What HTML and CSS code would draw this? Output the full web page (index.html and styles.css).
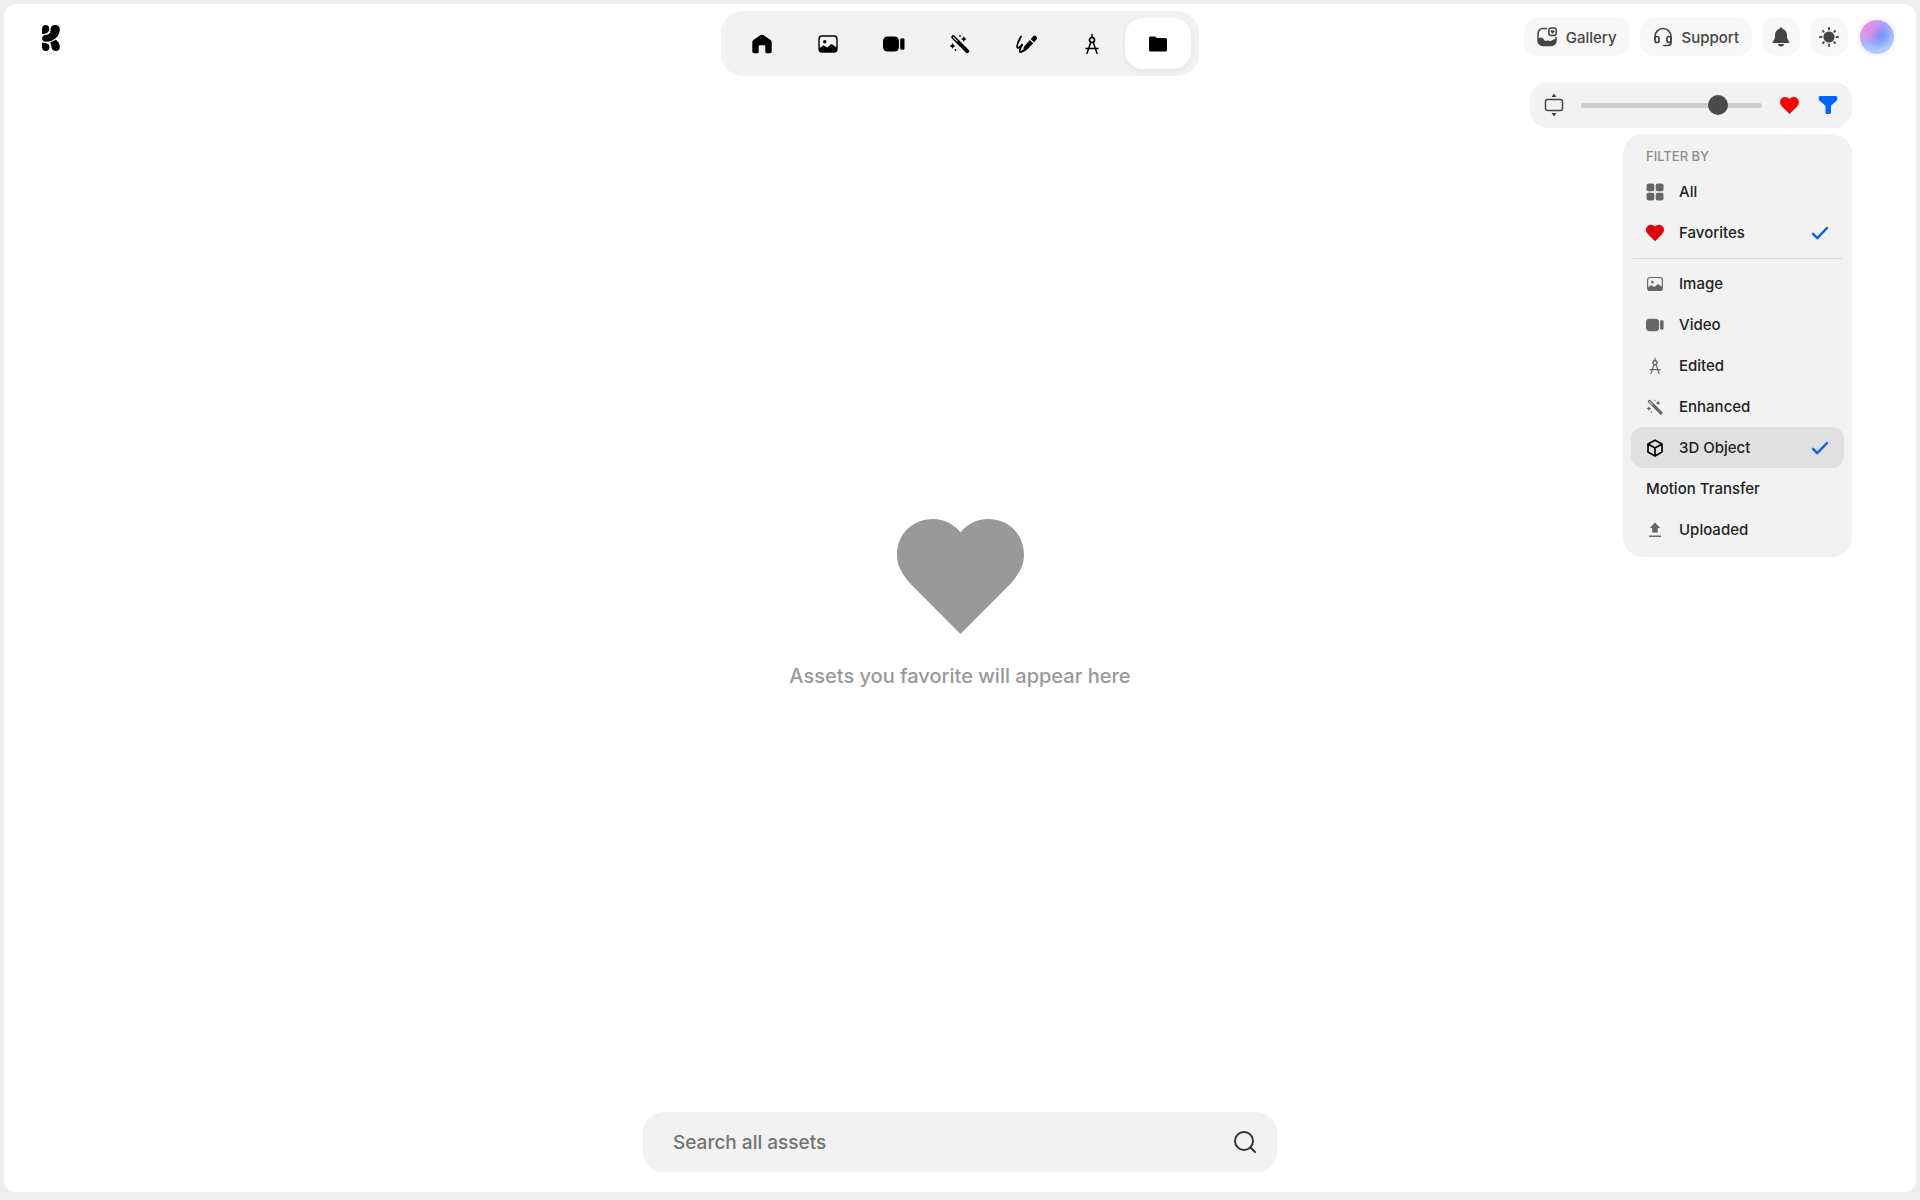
FILE: index.html
```html
<!DOCTYPE html>
<html lang="en">
<head>
<meta charset="utf-8">
<meta name="viewport" content="width=device-width, initial-scale=1">
<title>Assets</title>
<link rel="stylesheet" href="styles.css">
</head>
<body>
<svg class="sprite" aria-hidden="true">
  <symbol id="i-heart" viewBox="0 0 126 114"><path fill="currentColor" d="M63 114 14 65C5 55 0 46 0 36 0 15 15 0 36 0c11 0 20 5 27 13C70 5 79 0 90 0c21 0 36 15 36 36 0 10-5 19-14 29Z"/></symbol>
  <symbol id="i-home" viewBox="0 0 22 22"><path fill="currentColor" d="M9.7 2.1a2.4 2.4 0 0 1 2.6 0l7 4.6A3 3 0 0 1 20.700 9.200V18.500A1.800 1.800 0 0 1 18.900 20.300H15.800A1.500 1.500 0 0 1 14.300 18.800V13.500A1.300 1.300 0 0 0 13 12.200H9A1.300 1.300 0 0 0 7.700 13.500V18.800A1.500 1.500 0 0 1 6.200 20.300H3.100A1.800 1.800 0 0 1 1.300 18.500V9.200A3 3 0 0 1 2.700 6.700Z"/></symbol>
  <symbol id="i-image" viewBox="0 0 22 22"><rect x="2" y="3" width="18" height="16" rx="3.200" fill="none" stroke="currentColor" stroke-width="1.400"/><circle cx="7.800" cy="8.700" r="1.700" fill="currentColor"/><path fill="currentColor" d="M2 15.500 5 13.200Q6.500 12 8 13.200L10.200 14.600 13.300 11.800Q14.600 10.800 16 11.900L20 14.800V16a3 3 0 0 1-3 3H5a3 3 0 0 1-3-3Z"/></symbol>
  <symbol id="i-video" viewBox="0 0 22 22"><rect x="0" y="3.500" width="16" height="15" rx="4.500" fill="currentColor"/><rect x="17.200" y="5.200" width="4.300" height="11.500" rx="1.600" fill="currentColor"/></symbol>
  <symbol id="i-wand" viewBox="0 0 22 22"><path d="m4.200 4.200 14 14" stroke="currentColor" stroke-width="4" stroke-linecap="round"/><path class="wand-slot" d="m4.300 4.300 3.800 3.800" stroke-width="1.300" stroke-linecap="round"/><path fill="currentColor" d="m14.800 3.200 1 1.900 1.900 1-1.900 1-1 1.900-1-1.900-1.900-1 1.900-1ZM3.500 10l1 1.900 1.900 1-1.900 1-1 1.900-1-1.900-1.900-1 1.900-1Z"/><circle cx="11" cy="2.900" r=".9" fill="currentColor"/><circle cx="6.500" cy="17" r=".9" fill="currentColor"/></symbol>
  <symbol id="i-pen" viewBox="0 0 22 22"><path d="M6 3.500C3.500 8 1.800 11.800 2.200 14c.4 2 3.300.3 5.300-3C5.800 14 4.300 17.500 4.900 18.700c.5 1 1.800.2 3.300-1.200" fill="none" stroke="currentColor" stroke-width="1.800" stroke-linecap="round"/><path fill="currentColor" d="M8 19 8.600 14.800Q8.800 13.700 9.600 12.900L14.800 7 18.200 10.200 12.800 16.100Q12 17 11 17.400ZM15.700 6 18 3.400a2.300 2.300 0 0 1 3.300 3.300L19.100 9.200Z"/></symbol>
  <symbol id="i-compass" viewBox="0 0 22 22"><g fill="none" stroke="currentColor" stroke-width="1.500" stroke-linecap="round"><path d="M11 1.500v3M9.800 9.300 6 20.300M12.200 9.300 16 20.300M5 15.500h12"/><circle cx="11" cy="7" r="2.500" stroke-width="1.700"/></g></symbol>
  <symbol id="i-folder" viewBox="0 0 22 22"><path fill="currentColor" d="M2 5a1.500 1.500 0 0 1 1.500-1.500h4.200c.7 0 1 .3 1.400.8l.6.700h8.800A1.500 1.500 0 0 1 20 6.500V17a1.500 1.500 0 0 1-1.500 1.500h-15A1.500 1.500 0 0 1 2 17Z"/></symbol>
  <symbol id="i-check" viewBox="0 0 18 18"><path d="m2 9.800 4.300 4.400L16 4" fill="none" stroke="currentColor" stroke-width="2.500" stroke-linecap="round" stroke-linejoin="round"/></symbol>
</svg>

<div class="app">
  <header class="header">
    <a class="logo" href="#" aria-label="Home page">
      <svg width="18" height="26" viewBox="0 0 18 26"><path d="M0 4.200C0 1.500 1.600 0 3.700 0S7.300 1.600 7.300 4C7.300 7.200 4.500 8.900 0 9.100ZM8.600 4.200C8.600 1.500 10.500 0 13.300 0S17.800 1.600 17.800 4.300C17.800 11 12 16.800 4.200 16.800 1.500 16.800 0 15.300 0 13.200S1.700 10 3.500 9.900C7 9.700 8.600 8 8.600 4.200ZM0 17.800C4.500 17.800 7.500 19 7.500 22.200 7.500 24.600 5.800 26 3.700 26S0 24.500 0 22ZM8 17.600 13.800 14.800C16.500 16.500 17.800 19.500 17.800 22.300 17.800 24.700 16.400 26 14 26S9.900 24.700 9.500 22.500C9.300 20.600 9.100 18.800 8 17.600Z"/></svg>
    </a>
    <nav class="nav" aria-label="Tools">
      <a class="nav-item" href="#" aria-label="Home"><svg class="nav-icon"><use href="#i-home"/></svg></a>
      <a class="nav-item" href="#" aria-label="Image"><svg class="nav-icon"><use href="#i-image"/></svg></a>
      <a class="nav-item" href="#" aria-label="Video"><svg class="nav-icon"><use href="#i-video"/></svg></a>
      <a class="nav-item" href="#" aria-label="Enhance"><svg class="nav-icon"><use href="#i-wand"/></svg></a>
      <a class="nav-item" href="#" aria-label="Draw"><svg class="nav-icon"><use href="#i-pen"/></svg></a>
      <a class="nav-item" href="#" aria-label="Edit"><svg class="nav-icon"><use href="#i-compass"/></svg></a>
      <a class="nav-item active" href="#" aria-label="Assets" aria-current="page"><svg class="nav-icon"><use href="#i-folder"/></svg></a>
    </nav>
    <div class="actions">
      <a class="pill" href="#">
        <svg width="20" height="20" viewBox="0 0 20 20"><path d="M10 1.500H6A5 5 0 0 0 1 6.500v7a5 5 0 0 0 5 5h8a5 5 0 0 0 5-5V10" fill="none" stroke="currentColor" stroke-width="1.500"/><path fill="currentColor" d="M1 11.500 3.500 10.500Q5 10.300 6 11.600L8 14l2.500-.6 3 .5L19 11.500V14a5 5 0 0 1-5 5H6a5 5 0 0 1-5-5Z"/><rect x="11.800" y="1" width="7.400" height="7.400" rx="2.200" fill="none" stroke="currentColor" stroke-width="1.500"/><path fill="currentColor" d="m15.500 6.800-2-2a1.200 1.200 0 0 1 2-1.200 1.200 1.200 0 0 1 2 1.200Z"/></svg>
        Gallery
      </a>
      <button class="pill" type="button">
        <svg width="20" height="20" viewBox="0 0 20 20" fill="none" stroke="currentColor" stroke-width="1.700" stroke-linecap="round"><path d="M2 12V9.500a8 8 0 0 1 16 0V15.500a3 3 0 0 1-3 3h-4"/><rect x="2" y="9.500" width="4" height="6" rx="2"/><rect x="14" y="9.500" width="4" height="6" rx="2"/></svg>
        Support
      </button>
      <button class="pill square" type="button" aria-label="Notifications">
        <svg width="20" height="20" viewBox="0 0 20 20" fill="currentColor"><path d="M10 .5c.9 0 1.600.6 1.700 1.500 2.700.8 4.200 3 4.200 5.800 0 3.600.8 5.200 2.200 6.700.5.600.2 1.500-.6 1.500h-15c-.8 0-1.100-.9-.6-1.500 1.400-1.500 2.200-3.100 2.200-6.700C4.100 5 5.600 2.800 8.300 2 8.400 1.100 9.100.5 10 .5ZM7 17h6c0 1.500-1.200 2.500-3 2.500S7 18.500 7 17Z"/></svg>
      </button>
      <button class="pill square" type="button" aria-label="Light theme">
        <svg width="20" height="20" viewBox="0 0 20 20"><circle cx="10" cy="10" r="5.600" fill="currentColor"/><path d="M10 1v1.500M10 17.500V19M1 10h1.500M17.500 10H19M3.900 3.900l.9.900M15.200 15.200l.9.900M3.900 16.100l.9-.9M15.200 4.800l.9-.9" stroke="currentColor" stroke-width="1.900" stroke-linecap="round"/></svg>
      </button>
      <button class="pill square" type="button" aria-label="Account"><span class="avatar"></span></button>
    </div>
  </header>

  <div class="toolbar-row">
    <div class="toolbar">
      <svg width="20" height="26" viewBox="0 0 20 26"><rect x="1.500" y="7.500" width="17" height="11" rx="2" fill="none" stroke="currentColor" stroke-width="1.500"/><path fill="currentColor" d="M10 1.500 12.500 5h-5ZM10 24.500 7.500 21h5Z"/></svg>
      <input class="size-slider" type="range" min="0" max="100" value="79" aria-label="Thumbnail size">
      <button class="tool favorite" type="button" aria-label="Favorites"><svg width="19" height="17"><use href="#i-heart"/></svg></button>
      <button class="tool filter" type="button" aria-label="Filter" aria-expanded="true"><svg width="20" height="18" viewBox="0 0 20 18"><path fill="currentColor" d="M2.200 0h15.600A1.500 1.500 0 0 1 19.300 1.500V3a2 2 0 0 1-.6 1.400L13 9.700V16.500A1.500 1.500 0 0 1 11.500 18h-2.500A1.500 1.500 0 0 1 7.500 16.500V9.700L1.300 4.400A2 2 0 0 1 .7 3V1.500A1.500 1.500 0 0 1 2.200 0Z"/></svg></button>

      <div class="menu" role="group" aria-labelledby="filter-title">
        <h2 class="menu-title" id="filter-title">FILTER BY</h2>
        <button class="menu-item" type="button"><svg class="menu-icon" viewBox="0 0 18 18" fill="currentColor"><rect x=".5" y=".5" width="7.800" height="7.800" rx="2"/><rect x="9.700" y=".5" width="7.800" height="7.800" rx="2"/><rect x=".5" y="9.700" width="7.800" height="7.800" rx="2"/><rect x="9.700" y="9.700" width="7.800" height="7.800" rx="2"/></svg>All</button>
        <button class="menu-item" type="button" aria-pressed="true"><svg class="menu-icon red"><use href="#i-heart"/></svg>Favorites<svg class="check"><use href="#i-check"/></svg></button>
        <hr class="menu-line">
        <button class="menu-item" type="button"><svg class="menu-icon"><use href="#i-image"/></svg>Image</button>
        <button class="menu-item" type="button"><svg class="menu-icon"><use href="#i-video"/></svg>Video</button>
        <button class="menu-item" type="button"><svg class="menu-icon"><use href="#i-compass"/></svg>Edited</button>
        <button class="menu-item" type="button"><svg class="menu-icon"><use href="#i-wand"/></svg>Enhanced</button>
        <button class="menu-item selected" type="button" aria-pressed="true"><svg class="menu-icon" viewBox="0 0 18 18" fill="none" stroke="currentColor" stroke-width="1.700" stroke-linejoin="round"><path d="M9 1.200 16 5v8l-7 3.900L2 13V5ZM2 5l7 4 7-4M9 9v7.900"/></svg>3D Object<svg class="check"><use href="#i-check"/></svg></button>
        <button class="menu-item" type="button">Motion Transfer</button>
        <button class="menu-item" type="button"><svg class="menu-icon" viewBox="0 0 18 18" fill="currentColor"><path d="M9 1.500 14.200 7H11.800v4.500H6.200V7H3.800Z"/><rect x="3" y="14.500" width="12" height="1.500"/></svg>Uploaded</button>
      </div>
    </div>
  </div>

  <main class="empty">
    <svg class="empty-heart"><use href="#i-heart"/></svg>
    <p class="empty-text">Assets you favorite will appear here</p>
  </main>

  <form class="search" role="search">
    <input class="search-input" type="search" placeholder="Search all assets" aria-label="Search all assets">
    <button class="search-button" type="submit" aria-label="Search"><svg width="24" height="24" viewBox="0 0 24 24" fill="none" stroke="currentColor" stroke-width="2" stroke-linecap="round"><circle cx="11" cy="11" r="9"/><path d="m17.500 17.500 4.500 4.500"/></svg></button>
  </form>
</div>
</body>
</html>
```
FILE: styles.css
```css
* {
  box-sizing: border-box;
}

body {
  margin: 0;
  padding: 4px 4px 8px;
  background: #eeeeee;
  color: #222222;
  font-family: Inter, "Liberation Sans", sans-serif;
  font-size: 15px;
  font-weight: 500;
}

button,
input {
  margin: 0;
  padding: 0;
  border: 0;
  background: none;
  color: inherit;
  font: inherit;
}

a {
  color: inherit;
  text-decoration: none;
}

svg {
  display: block;
  flex: none;
}

.sprite {
  position: absolute;
  width: 0;
  height: 0;
}

.app {
  display: flex;
  flex-direction: column;
  min-height: calc(100vh - 12px);
  padding-bottom: 20px;
  border-radius: 12px;
  background: #ffffff;
}

.header {
  display: grid;
  grid-template-columns: 1fr auto 1fr;
  align-items: start;
  padding: 7px 20px 0;
}

.logo {
  justify-self: start;
  padding: 14px 18px 0;
  color: #000000;
}

.nav {
  display: flex;
  padding: 7px 8px;
  border-radius: 22px;
  background: #f2f2f2;
  color: #000000;
}

.nav-item {
  display: flex;
  align-items: center;
  justify-content: center;
  width: 66px;
  height: 51px;
  border-radius: 18px;
}

.nav-item.active {
  background: #ffffff;
  box-shadow: 0 2px 6px rgba(0, 0, 0, 0.06);
}

.nav-icon {
  width: 22px;
  height: 22px;
}

.wand-slot {
  stroke: #c8c8c8;
}

.actions {
  display: flex;
  gap: 10px;
  justify-content: flex-end;
  padding-top: 7px;
  color: #444444;
}

.pill {
  display: flex;
  align-items: center;
  justify-content: center;
  gap: 9px;
  height: 38px;
  padding: 0 13px;
  border-radius: 14px;
  background: #f7f7f7;
}

.pill.square {
  width: 38px;
  padding: 0;
}

.avatar {
  width: 34px;
  height: 34px;
  border-radius: 50%;
  background:
    radial-gradient(circle at 20% 25%, #f08ae0 0, rgba(240, 138, 224, 0) 50%),
    radial-gradient(circle at 55% 45%, #6a8cfa 0, rgba(106, 140, 250, 0) 55%),
    linear-gradient(160deg, #c99df5, #9fb8ff 50%, #b8d8ff);
}

.toolbar-row {
  display: flex;
  justify-content: flex-end;
  padding: 6px 64px 0 0;
}

.toolbar {
  position: relative;
  display: flex;
  align-items: center;
  width: 322px;
  height: 46px;
  padding: 0 14px;
  border-radius: 18px;
  background: #f2f2f2;
  color: #444444;
}

.size-slider {
  flex: 1;
  min-width: 0;
  height: 22px;
  margin: 0 18px 0 17px;
  appearance: none;
}

.size-slider::-webkit-slider-runnable-track {
  height: 5px;
  border-radius: 3px;
  background: #cccccc;
}

.size-slider::-webkit-slider-thumb {
  width: 20px;
  height: 20px;
  margin-top: -8px;
  border-radius: 50%;
  background: #4a4a4a;
  appearance: none;
}

.tool {
  display: flex;
}

.tool + .tool {
  margin-left: 19px;
}

.favorite {
  color: #ff0000;
}

.filter {
  color: #0066ff;
}

.menu {
  position: absolute;
  top: 52px;
  right: 0;
  z-index: 1;
  width: 229px;
  padding: 14px 8px 7px;
  border-radius: 20px;
  background: #f2f2f2;
  color: #222222;
}

.menu-title {
  margin: 0 0 7px;
  padding-left: 15px;
  color: #8c8c8c;
  font-size: 13px;
  font-weight: 500;
  line-height: 16px;
}

.menu-item {
  display: flex;
  align-items: center;
  width: 100%;
  height: 41px;
  padding: 0 15px;
  border-radius: 12px;
  text-align: left;
}

.menu-item.selected {
  background: #e0e0e0;
}

.menu-icon {
  width: 18px;
  height: 18px;
  margin-right: 15px;
  color: #666666;
}

.menu-icon.red {
  color: #e6000d;
}

.selected .menu-icon {
  color: #000000;
}

.check {
  width: 18px;
  height: 18px;
  margin-left: auto;
  color: #0a66e0;
}

.menu-line {
  height: 1px;
  margin: 5px 2px 4px;
  border: 0;
  background: #d9d9d9;
}

.empty {
  display: flex;
  flex: 1;
  flex-direction: column;
  align-items: center;
  justify-content: center;
  padding-bottom: 31px;
  color: #999999;
}

.empty-heart {
  width: 127px;
  height: 115px;
}

.empty-text {
  margin: 28px 0 0;
  font-size: 20px;
  line-height: 28px;
}

.search {
  display: flex;
  align-items: center;
  align-self: center;
  width: 634px;
  max-width: 100%;
  height: 60px;
  padding: 0 20px 0 30px;
  border-radius: 20px;
  background: #f2f2f2;
  color: #333333;
}

.search-input {
  flex: 1;
  min-width: 0;
  height: 100%;
  outline: 0;
  font-size: 19px;
}

.search-input::placeholder {
  color: #737373;
}
```
